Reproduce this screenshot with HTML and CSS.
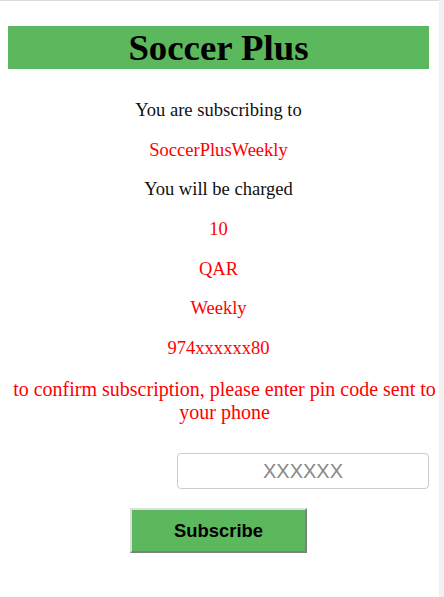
FILE: index.html
```html
<!DOCTYPE html>
<html lang="en">
<head>
  <meta charset="UTF-8" />
  <meta name="viewport" content="width=device-width, initial-scale=1.0"/>
  <title>Soccer Plus</title>
  <link rel="stylesheet" href="styles.css">
</head>
<body>
  <div class="page">
    <h1 class="title">Soccer Plus</h1>

    <div class="details">
      <p>You are subscribing to</p>
      <p class="red">SoccerPlusWeekly</p>
      <p>You will be charged</p>
      <p class="red">10</p>
      <p class="red">QAR</p>
      <p class="red">Weekly</p>
      <p class="red">974xxxxxx80</p>
      <p class="red confirm">to confirm subscription, please enter pin code sent to your phone</p>
    </div>

    <form class="pin-form">
      <div class="pin-row">
        <input type="text" class="pin" placeholder="XXXXXX">
      </div>
      <button type="button" class="subscribe">Subscribe</button>
    </form>
  </div>
</body>
</html>
```

FILE: styles.css
```css
* {
  box-sizing: border-box;
}
html {
  background: #f1f1f1;
}
body {
  margin: 0;
  font-family: 'Liberation Serif', 'Times New Roman', serif;
  color: #111;
}
.page {
  width: 439px;
  min-height: 100vh;
  background: #fff;
  border-top: 1px solid #dcdcdc;
  padding: 0 10px 0 8px;
  text-align: center;
}
.title {
  background: #5cb85c;
  color: #000;
  font-size: 2.3em;
  font-weight: bold;
  margin: 0.67em 0 0;
}
.details {
  padding-top: 12px;
}
.details p {
  font-size: 1.16em;
  line-height: 21px;
  margin: 18.6px 0;
}
.details .red {
  color: #ff0000;
}
.details .confirm {
  font-size: 20px;
  line-height: 23px;
  margin: 20.5px -12px 0 0;
}
.pin-form {
  margin-top: 29px;
}
.pin-row {
  display: flex;
  justify-content: flex-end;
}
.pin {
  width: 252px;
  height: 36px;
  border: 1px solid #ccc;
  border-radius: 4px;
  font-family: 'Liberation Sans', Arial, sans-serif;
  font-size: 20px;
  text-align: center;
  padding: 0;
}
.pin::placeholder {
  color: #8a8a8a;
}
.subscribe {
  margin-top: 19px;
  width: 177px;
  height: 45px;
  background: #5cb85c;
  border: 2px solid;
  border-color: #dedede #808080 #808080 #dedede;
  font-family: 'Liberation Sans', Arial, sans-serif;
  font-size: 18.4px;
  font-weight: bold;
  color: #000;
}
```
